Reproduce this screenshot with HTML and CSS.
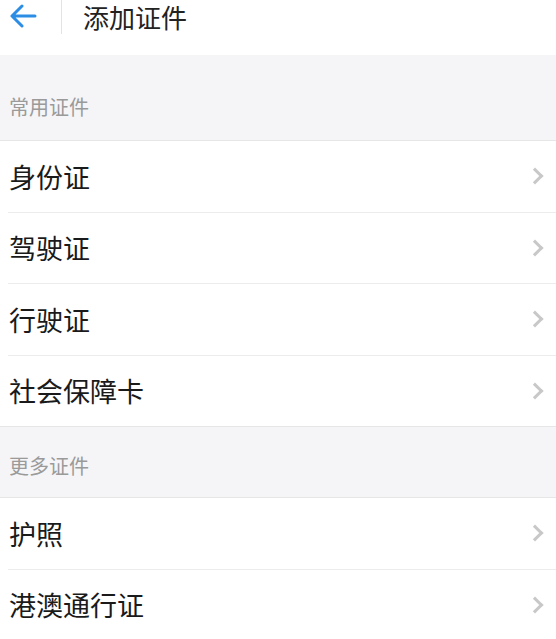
FILE: index.html
```html
<!DOCTYPE html>
<html>
  <head>
    <meta charset="UTF-8" />
    <title>添加证件</title>
    <link rel="stylesheet" href="styles.css">
  </head>
  <body>
    <div class="header">
      <div class="back">
        <svg width="28" height="24" viewBox="0 0 28 24">
          <path d="M26 12H3M13 2L3 12l10 10" fill="none" stroke="#2b8de3" stroke-width="3" stroke-linecap="round" stroke-linejoin="round" />
        </svg>
      </div>
      <div class="title">添加证件</div>
    </div>

    <div class="section first">常用证件</div>
    <div class="list">
      <div class="row"><span>身份证</span><i class="arrow"></i></div>
      <div class="row"><span>驾驶证</span><i class="arrow"></i></div>
      <div class="row"><span>行驶证</span><i class="arrow"></i></div>
      <div class="row"><span>社会保障卡</span><i class="arrow"></i></div>
    </div>

    <div class="section">更多证件</div>
    <div class="list">
      <div class="row"><span>护照</span><i class="arrow"></i></div>
      <div class="row"><span>港澳通行证</span><i class="arrow"></i></div>
    </div>
  </body>
</html>
```

FILE: styles.css
```css
* {
  margin: 0;
  padding: 0;
  box-sizing: border-box;
}
body {
  width: 556px;
  height: 639px;
  overflow: hidden;
  background-color: #f5f5f7;
  font-family: "Noto Sans CJK SC", "Noto Sans", sans-serif;
  color: #1a1a1a;
}
.header {
  height: 55px;
  background-color: #fff;
  display: flex;
  align-items: flex-start;
}
.back {
  width: 62px;
  height: 34px;
  padding-left: 9px;
  padding-top: 4px;
  border-right: 1px solid #e3e3e3;
}
.title {
  height: 36px;
  line-height: 34px;
  padding-left: 21px;
  font-size: 26px;
  color: #222;
}
.section {
  height: 70px;
  padding: 6px 9px 0;
  display: flex;
  align-items: center;
  font-size: 20px;
  color: #9a9a9a;
}
.section.first {
  height: 85px;
  padding-top: 18px;
}
.list {
  background-color: #fff;
  border-top: 1px solid #e6e6e6;
  border-bottom: 1px solid #e6e6e6;
}
.row {
  height: 71.5px;
  margin-left: 8px;
  padding: 0 11px 0 1px;
  display: flex;
  align-items: center;
  justify-content: space-between;
  font-size: 27px;
  border-top: 1px solid #ececec;
}
.row:first-child {
  border-top: none;
  height: 70.5px;
}
.arrow {
  width: 12px;
  height: 12px;
  margin-right: 4px;
  border-top: 3px solid #c8c8c8;
  border-right: 3px solid #c8c8c8;
  transform: rotate(45deg);
}
```
